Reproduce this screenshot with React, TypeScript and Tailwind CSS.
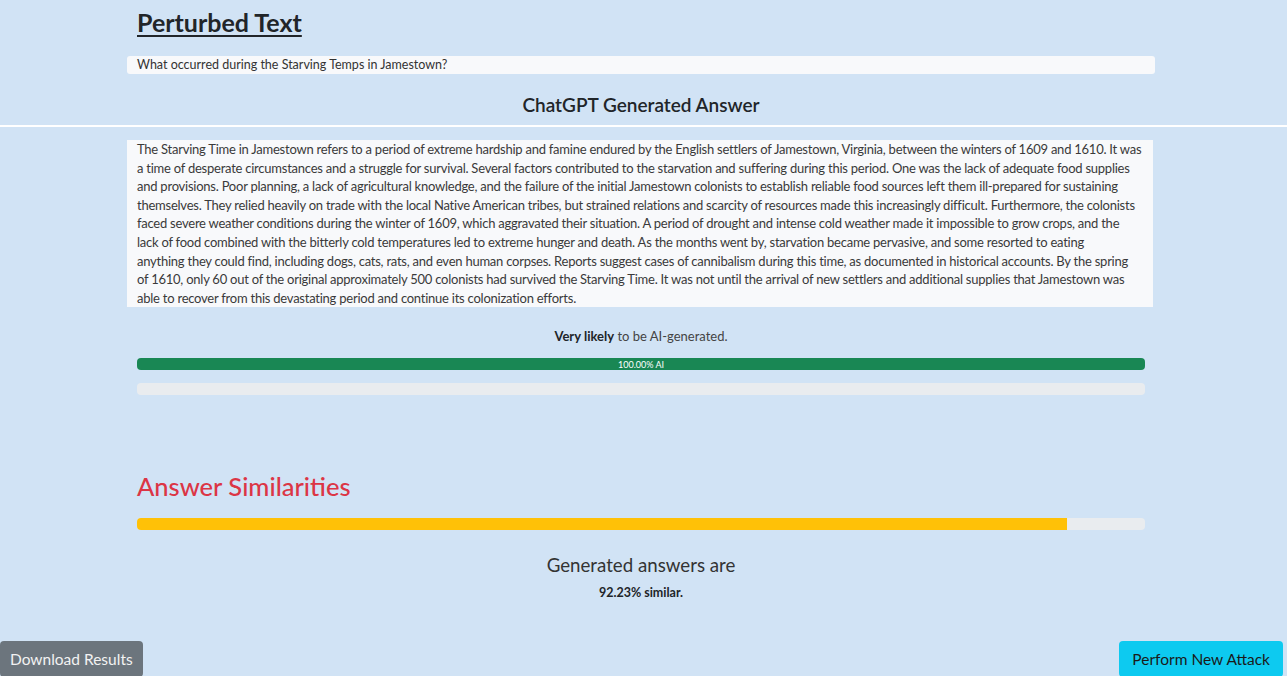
import React from "react";

const answerStart =
  "The Starving Time in Jamestown refers to a period of extreme hardship and famine endured by the English settlers of Jamestown, Virginia, between the winters of 1609 and 1610. It was a time of desperate circumstances and a struggle for survival. Several factors contributed to the starvation and suffering during this period. One was the lack of adequate food supplies and provisions. Poor planning, a lack of agricultural knowledge, and the failure of the initial Jamestown colonists to establish reliable food sources left them ill-prepared for sustaining themselves. They relied heavily on trade with the local Native American tribes, but strained relations and scarcity of resources made this increasingly difficult. Furthermore, the colonists faced severe weather conditions during the winter of 1609, which aggravated their situation. A period of drought and intense cold weather made it impossible to grow crops, and the lack of food combined with the bitterly cold temperatures led to extreme hunger and death. As the months went by, starvation became pervasive, and some resorted to eating ";
const answerMid =
  " could find, including dogs, cats, rats, and even human corpses. Reports suggest cases of cannibalism during this time, as documented in historical accounts. By the spring ";
const answerEnd =
  " only 60 out of the original approximately 500 colonists had survived the Starving Time. It was not until the arrival of new settlers and additional supplies that Jamestown was able to recover from this devastating period and continue its colonization efforts.";

function Bar({ pct, color, label }: { pct: number; color: string; label?: string }) {
  return (
    <div className="mx-[10px] h-[12px] overflow-hidden rounded-[4px] bg-[#e9ecef]">
      <div
        className={`flex h-full items-center justify-center ${color} text-[9px] leading-none text-white`}
        style={{ width: `${pct}%` }}
      >
        {label}
      </div>
    </div>
  );
}

export default function App() {
  return (
    <div className="h-[676px] overflow-hidden bg-[#d1e3f5] font-['Lato','Liberation_Sans',sans-serif] text-[#212529]">
      <div className="ml-[127px] w-[1028px]">
        <h2 className="px-[10px] text-[25px] font-bold leading-[44px] underline decoration-2 underline-offset-[3px]">
          Perturbed Text
        </h2>
        <div className="mt-[12px] h-[18px] rounded-[3px] bg-[#f8f9fb] px-[10px] text-[12.5px] leading-[18px] text-[#333]">
          What occurred during the Starving Temps in Jamestown?
        </div>
        <h3 className="mt-[17px] text-center text-[19px] font-semibold leading-[28px]">
          ChatGPT Generated Answer
        </h3>
      </div>
      <div className="mt-[6px] h-[2px] bg-white" />
      <div className="ml-[127px] w-[1028px]">
        <div className="mt-[13px] mr-[2px] bg-[#f8f9fb] px-[10px] text-[13px] leading-[18.6px] tracking-[-0.24px] text-[#3a3a3a]">
          {answerStart}
          <span className="whitespace-nowrap">anything they</span>
          {answerMid}
          <span className="whitespace-nowrap">of 1610,</span>
          {answerEnd}
        </div>
        <p className="mt-[19px] text-center text-[13px] leading-[20px] text-[#444]">
          <span className="font-bold text-[#212529]">Very likely</span> to be AI-generated.
        </p>
        <div className="mt-[12px]">
          <Bar pct={100} color="bg-[#198754]" label="100.00% AI" />
        </div>
        <div className="mt-[13px]">
          <Bar pct={0} color="bg-[#198754]" />
        </div>
        <h2 className="mt-[73px] px-[10px] text-[25.5px] font-medium leading-[36px] text-[#dc3545]">
          Answer Similarities
        </h2>
        <div className="mt-[14px]">
          <Bar pct={92.23} color="bg-[#ffc107]" />
        </div>
        <p className="mt-[21px] text-center text-[18.7px] leading-[28px] text-[#333]">
          Generated answers are
        </p>
        <p className="mt-[5px] text-center text-[12.5px] font-bold leading-[18px]">92.23% similar.</p>
      </div>
      <div className="mt-[39px] flex justify-between pr-[4px]">
        <button className="h-[36px] rounded-[4px] bg-[#6c757d] px-[10px] text-[15.5px] text-[#f2f2f2]">
          Download Results
        </button>
        <button className="h-[36px] rounded-[4px] bg-[#0dcaf0] px-[13px] text-[15.5px] text-[#1a1a1a]">
          Perform New Attack
        </button>
      </div>
    </div>
  );
}
